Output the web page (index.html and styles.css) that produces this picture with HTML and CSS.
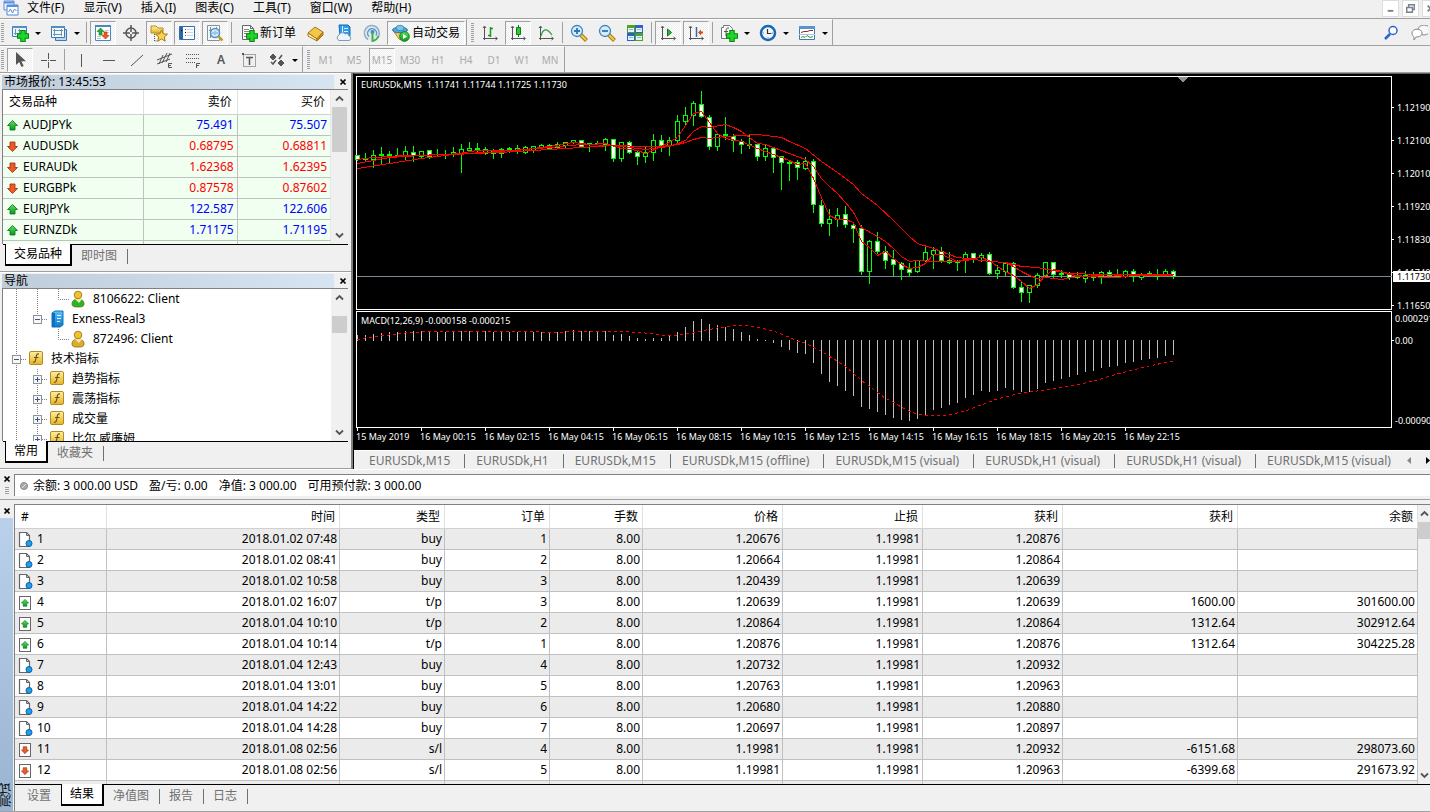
FILE: index.html
```html
<!DOCTYPE html>
<html lang="zh-CN">
<head>
<meta charset="utf-8">
<title>EURUSDk,M15</title>
<link rel="stylesheet" href="styles.css">
</head>
<body>
<svg class="defs" aria-hidden="true">
  <defs>
    <linearGradient id="gold" x1="0" y1="0" x2="0" y2="1"><stop offset="0" stop-color="#fff0a0"/><stop offset="1" stop-color="#e3b32a"/></linearGradient>
    <linearGradient id="green" x1="0" y1="0" x2="0" y2="1"><stop offset="0" stop-color="#5be05b"/><stop offset="1" stop-color="#0a9a1c"/></linearGradient>
    <linearGradient id="blue" x1="0" y1="0" x2="0" y2="1"><stop offset="0" stop-color="#55c4fb"/><stop offset="1" stop-color="#0b77c9"/></linearGradient>
  </defs>
  <symbol id="plus" viewBox="0 0 11 11"><path d="M3.500.5h4v3h3v4h-3v3h-4v-3h-3v-4h3z" fill="#1bd82a" stroke="#078a12"/></symbol>
  <symbol id="app" viewBox="0 0 16 16"><path d="M1 1h10v9H1z" fill="#eef5ff" stroke="#5b8fdc"/><path d="M1 2.500h10" stroke="#5b8fdc" stroke-width="2"/><path d="M4 5h11v10H4z" fill="#fff" stroke="#4f86d8"/><path d="M4 6h11" stroke="#5b8fdc" stroke-width="2"/><path d="M5.500 12l2-3 2 4 2-4 2 2" fill="none" stroke="#4f86d8"/></symbol>
  <symbol id="newchart" viewBox="0 0 18 18"><path d="M1.500 2.500h14v10h-14z" fill="#e9f4fb" stroke="#3f79b0"/><path d="M1 3h15" stroke="#4f8fc6" stroke-width="2"/><path d="M4.500 5v6M3 9.500h9M8.500 5v5M7 6.500h5" stroke="#6b93b5" fill="none"/><use href="#plus" x="6" y="6" width="12" height="12"/></symbol>
  <symbol id="profiles" viewBox="0 0 18 18"><path d="M5.500 5.500h11v11h-11z" fill="#bcd8ee" stroke="#3f79b0"/><path d="M1.500 2.500h13v11h-13z" fill="#f2f9fd" stroke="#3f79b0"/><path d="M1 3h14" stroke="#4f8fc6" stroke-width="2"/><path d="M4.500 5v7M3 10.500h9M11.500 5v7M3 6.500h10" stroke="#6b93b5" fill="none"/></symbol>
  <symbol id="market" viewBox="0 0 18 18"><path d="M1.500 1.500h15v15h-15z" fill="#fff" stroke="#4d86c0"/><path d="M1 2h16" stroke="#4d86c0" stroke-width="2"/><path d="M11 6.500h4M12 8.500h3M3 12.500h4M3 14.500h4" stroke="#b4c8dd"/><path d="M6.500 4l3.500 3.500H8V11H5V7.500H3z" fill="#2cad35" stroke="#087a13" stroke-width=".6"/><path d="M10 8h3v3.500h2L11.500 15 8 11.500h2z" fill="#ef5b25" stroke="#a92c07" stroke-width=".6"/></symbol>
  <symbol id="target" viewBox="0 0 18 18"><circle cx="9" cy="9" r="5" fill="none" stroke="#555" stroke-width="1.500"/><path d="M9 1v7M9 10v7M1 9h7M10 9h7" stroke="#555" stroke-width="1.500"/></symbol>
  <symbol id="favs" viewBox="0 0 18 18"><path d="M1 2h5l2 2h5v5H1z" fill="url(#gold)" stroke="#b88a1a"/><path d="M4.500 10v7H8" fill="none" stroke="#555" stroke-dasharray="1 1"/><path d="M11.500 6l1.700 3.800 4.300.4-3.200 2.800.9 4.200-3.700-2.200-3.700 2.200.9-4.200-3.200-2.800 4.300-.4z" fill="#fbd24c" stroke="#a57a12"/></symbol>
  <symbol id="terminal" viewBox="0 0 18 18"><path d="M1.500 2.500h15v13h-15z" fill="#fff" stroke="#2f6fb2"/><path d="M3.500 3v12" stroke="#2a66ab" stroke-width="3"/><path d="M7 5.500h1M7 11.500h1" stroke="#e22"/><path d="M7 8.500h1M3 6.500h1" stroke="#000"/><path d="M9 5.500h6M9 8.500h6M9 11.500h6" stroke="#c6d8ea"/></symbol>
  <symbol id="tester" viewBox="0 0 18 18"><path d="M1.500 1.500h12v15h-12z" fill="#f6f8fa" stroke="#8a9097"/><path d="M4.500 3v11M3 6.500h3M10.500 3v5" stroke="#7f878e"/><circle cx="9" cy="9" r="4.500" fill="#cfe9fa" fill-opacity=".9" stroke="#5793c4" stroke-width="1.500"/><path d="M12.500 12.500l4 4" stroke="#c99a2a" stroke-width="2.500"/><path d="M7 10V8M9 11V7M11 10V8" stroke="#6aa3cf"/></symbol>
  <symbol id="order" viewBox="0 0 18 18"><path d="M2.500 1.500h8l3 3v11h-11z" fill="#fafafa" stroke="#666"/><path d="M10.500 1.500v3h3" fill="none" stroke="#666"/><path d="M4 5.500h5M4 7.500h7M4 9.500h6M4 12.500h3" stroke="#888"/><use href="#plus" x="6" y="6" width="12" height="12"/></symbol>
  <symbol id="book" viewBox="0 0 18 18"><path d="M1 9l7-6 8 5-6 7z" fill="#f3c84a" stroke="#a8760d"/><path d="M1 9v3l9 5v-2z" fill="#fff3c4" stroke="#a8760d"/><path d="M10 15l6-7v3l-6 6z" fill="#c98d17" stroke="#a8760d"/></symbol>
  <symbol id="cloud" viewBox="0 0 18 18"><path d="M4 1h9l2 2v9H5z" fill="#2f9cec" stroke="#1769b0"/><path d="M7.500 2v9M9 4.500h4M9 7.500h4" stroke="#d7efff"/><path d="M4 16.500a3 3 0 0 1 0-5.500 3.500 3.500 0 0 1 6-1 3 3 0 0 1 4 2 2.300 2.300 0 0 1 0 4.500z" fill="#edf3fb" stroke="#7f9cbd"/></symbol>
  <symbol id="signal" viewBox="0 0 18 18"><circle cx="9" cy="9" r="8" fill="#e1e8ef"/><path d="M5 15.500a7.500 7.500 0 1 1 9-1" fill="none" stroke="#93abc0" stroke-width="1.500"/><path d="M6 12.500a4.500 4.500 0 1 1 7-1" fill="none" stroke="#5f9bbd" stroke-width="1.500"/><circle cx="9.500" cy="8" r="2" fill="#3a86c8"/><path d="M9.500 8v9a8 8 0 0 0 6-5" fill="none" stroke="#3fb14c" stroke-width="2"/></symbol>
  <symbol id="auto" viewBox="0 0 18 18"><path d="M2 8h12l-5 8-2-1z" fill="#f5cf55" stroke="#ba8d1c"/><ellipse cx="8" cy="6" rx="7.500" ry="2.800" fill="#4fa8d8" stroke="#2a78a8"/><ellipse cx="8" cy="4" rx="4" ry="2.800" fill="#76c6ea" stroke="#2a78a8" stroke-width=".7"/><circle cx="12.500" cy="12.500" r="4.800" fill="url(#green)" stroke="#0a7a17"/><path d="M11 10v5l4-2.500z" fill="#fff"/></symbol>
  <symbol id="axes" viewBox="0 0 18 18"><path d="M3.500 3v13M2 14.500h14M2 4l1.500-2L5 4M14.500 13l2 1.500-2 1.500" fill="none" stroke="#555"/></symbol>
  <symbol id="bars" viewBox="0 0 18 18"><use href="#axes"/><path d="M7 11.500h2M9.500 3v10M9 4.500h3" fill="none" stroke="#149a22" stroke-width="1.500"/></symbol>
  <symbol id="candles" viewBox="0 0 18 18"><use href="#axes"/><path d="M9.500 1v12" stroke="#0a7c18"/><path d="M7.500 3.500h4v7h-4z" fill="#27cc38" stroke="#0a7c18"/></symbol>
  <symbol id="line" viewBox="0 0 18 18"><use href="#axes"/><path d="M4 12c2-8 6-8 11-1" fill="none" stroke="#2b9a3a" stroke-width="1.200"/></symbol>
  <symbol id="zoomin" viewBox="0 0 18 18"><path d="M10.500 10.500l6 6" stroke="#a87c14" stroke-width="4"/><path d="M11 11l5 5" stroke="#f1cd4c" stroke-width="2"/><circle cx="7" cy="7" r="5.500" fill="#d3ecfa" stroke="#4286bd" stroke-width="1.300"/><path d="M4 7h6M7 4v6" stroke="#2c77b4" stroke-width="1.800"/></symbol>
  <symbol id="zoomout" viewBox="0 0 18 18"><path d="M10.500 10.500l6 6" stroke="#a87c14" stroke-width="4"/><path d="M11 11l5 5" stroke="#f1cd4c" stroke-width="2"/><circle cx="7" cy="7" r="5.500" fill="#d3ecfa" stroke="#4286bd" stroke-width="1.300"/><path d="M4 7h6" stroke="#2c77b4" stroke-width="1.800"/></symbol>
  <symbol id="tile" viewBox="0 0 18 18"><path d="M1 1h8v8H1zM9 9h8v8H9z" fill="#4aa51c"/><path d="M9 1h8v8H9zM1 9h8v8H1z" fill="#2c62cc"/><path d="M2 4h6v4H2zM10 4h6v4h-6zM2 12h6v4H2zM10 12h6v4h-6z" fill="#e9f2fb"/><path d="M3 5.500h4M11 5.500h4M3 13.500h4M11 13.500h4" stroke="#8fb9d9"/></symbol>
  <symbol id="scroll" viewBox="0 0 18 18"><use href="#axes"/><path d="M8.500 5v7l4-3.500z" fill="#25bb35" stroke="#0a7c18"/></symbol>
  <symbol id="shift" viewBox="0 0 18 18"><use href="#axes"/><path d="M9.500 3v10" stroke="#2c68ad" stroke-width="1.500"/><path d="M11 8.500l3-3v2h2v2h-2v2z" fill="#dd4511"/></symbol>
  <symbol id="indicators" viewBox="0 0 18 18"><path d="M1.500 3.500h2v-2h6l3 3v10h-11z" fill="#fafafa" stroke="#777"/><path d="M9 4c-3-.5-3 1-3 8M4 7.500h4" fill="none" stroke="#555"/><use href="#plus" x="6" y="6" width="12" height="12"/></symbol>
  <symbol id="clock" viewBox="0 0 18 18"><circle cx="9" cy="9" r="7" fill="#eef6fc" stroke="#1c66b8" stroke-width="2.500"/><path d="M8.500 5v4.500h4" fill="none" stroke="#333" stroke-width="1.200"/><path d="M4 9h1M13 9h1M9 13v1" stroke="#888"/></symbol>
  <symbol id="template" viewBox="0 0 18 18"><path d="M1.500 2.500h15v13h-15z" fill="#fff" stroke="#3f79b0"/><path d="M1 3.500h16" stroke="#5396d2" stroke-width="3"/><path d="M3 8.500l3-1h3l3-1h3" fill="none" stroke="#8b2a1b"/><path d="M3 13.500l2-1 2 1 2-2 3 2 3-1" fill="none" stroke="#2f9b3d"/><path d="M1 10.500h16" stroke="#a8c6e0"/></symbol>
  <symbol id="cursor" viewBox="0 0 18 18"><path d="M5 1v13l3.200-3 2.300 5 2.200-1-2.300-4.800H15z" fill="#555"/></symbol>
  <symbol id="cross" viewBox="0 0 18 18"><path d="M9.500 2v6M9.500 11v6M2 9.500h6M11 9.500h6" stroke="#555"/><path d="M9 9h1v1H9z" fill="#555"/></symbol>
  <symbol id="vline" viewBox="0 0 18 18"><path d="M9.500 3v13" stroke="#555"/></symbol>
  <symbol id="hline" viewBox="0 0 18 18"><path d="M3 9.500h12" stroke="#555"/></symbol>
  <symbol id="trend" viewBox="0 0 18 18"><path d="M3 15L15 4" stroke="#555"/></symbol>
  <symbol id="channel" viewBox="0 0 18 18"><path d="M1 9l15-6M1 13l13-5M3 13L7 4M6 12l5-10M10 11l4-9" stroke="#555" fill="none"/><path d="M16 12.500h-3.500v4H16M12 14.500h3" fill="none" stroke="#555"/></symbol>
  <symbol id="fibo" viewBox="0 0 18 18"><path d="M2 3.500h14M2 7.500h14M2 11.500h9" stroke="#555" stroke-dasharray="1 1"/><path d="M12.500 17v-4.500H16M12 14.500h3" fill="none" stroke="#555"/></symbol>
  <symbol id="labelbox" viewBox="0 0 18 18"><path d="M3.500 3.500h12v12h-12z" fill="none" stroke="#555" stroke-dasharray="1 1"/><path d="M2 2h2v2H2z" fill="#555"/><path d="M6 6.500h7M9.500 6v8" stroke="#555" stroke-width="1.500"/></symbol>
  <symbol id="arrows" viewBox="0 0 18 18"><path d="M5 3l3 3-3 3-3-3zM13 9l3 3-3 3-3-3z" fill="#555" stroke="#555"/><path d="M3 11l2 2 3-4M11 8l3-4" fill="none" stroke="#555" stroke-width="1.500"/></symbol>
  <symbol id="up" viewBox="0 0 11 11"><path d="M5.500.5l5 5H8v4.500H3V5.500H.5z" fill="url(#green)" stroke="#08701a" stroke-width=".8"/></symbol>
  <symbol id="down" viewBox="0 0 11 11"><path d="M5.500 10.500l5-5H8V1H3v4.500H.5z" fill="#ee5a26" stroke="#9c2a08" stroke-width=".8"/></symbol>
  <symbol id="person" viewBox="0 0 18 18"><path d="M3 14c0-3 2-5 6-5s6 2 6 5-3 3-6 3-6 0-6-3z" fill="currentColor" stroke="#7d6a18" stroke-width=".8"/><path d="M6 9l4 4 3-4" fill="#ffe9a5"/><circle cx="9" cy="5" r="3.800" fill="#f2c230" stroke="#946c10" stroke-width=".8"/></symbol>
  <symbol id="server" viewBox="0 0 18 18"><path d="M4 3l3-2h8v14l-3 2H4z" fill="url(#blue)" stroke="#1170b8"/><path d="M4 3v13l3 1V3z" fill="#0f71bd"/><path d="M9 5.500h4M9 8.500h4M9 11.500h3" stroke="#e3f5ff"/></symbol>
  <symbol id="func" viewBox="0 0 18 18"><rect x="2.500" y="1.500" width="13" height="13" rx="1.500" fill="url(#gold)" stroke="#b78b1b"/><path d="M12 4c-2.500-.5-2.500 1-3 4s-1 5-3 4M7 7.500h4.500" fill="none" stroke="#6e5310" stroke-width="1.200"/></symbol>
  <symbol id="doc" viewBox="0 0 16 17"><path d="M2.500 1.500h7l3 3v11h-10z" fill="#fff" stroke="#666" stroke-width="1.200"/><path d="M9.500 1v3.500H13" fill="none" stroke="#666"/><circle cx="12" cy="12.500" r="3" fill="#1ea0ee" stroke="#0c5f9f"/></symbol>
  <symbol id="tp" viewBox="0 0 16 17"><rect x="2.500" y="2.500" width="11" height="13" fill="#fff" stroke="#666"/><use href="#up" x="4" y="5" width="8" height="8"/></symbol>
  <symbol id="sl" viewBox="0 0 16 17"><rect x="2.500" y="2.500" width="11" height="13" fill="#fff" stroke="#666"/><use href="#down" x="4" y="5" width="8" height="8"/></symbol>
  <symbol id="g-v" viewBox="0 0 21 20"><path d="M10.500 0v20" stroke="#808080" stroke-dasharray="1 1"/></symbol>
  <symbol id="g-l" viewBox="0 0 21 20"><path d="M10.500 0v10.500H21" fill="none" stroke="#808080" stroke-dasharray="1 1"/></symbol>
  <symbol id="g-box" viewBox="0 0 21 20"><path d="M15 10.500h6" stroke="#808080" stroke-dasharray="1 1"/><rect x="6.500" y="6.500" width="8" height="8" fill="#f7f7f7" stroke="#919191"/><path d="M8 10.500h5" stroke="#3657a0"/></symbol>
  <symbol id="g-minus" viewBox="0 0 21 20"><path d="M10.500 0v20" stroke="#808080" stroke-dasharray="1 1"/><use href="#g-box"/></symbol>
  <symbol id="g-last" viewBox="0 0 21 20"><path d="M10.500 0v6" stroke="#808080" stroke-dasharray="1 1"/><use href="#g-box"/></symbol>
  <symbol id="g-plus" viewBox="0 0 21 20"><use href="#g-minus"/><path d="M10.500 8v5" stroke="#3657a0"/></symbol>
  <symbol id="x" viewBox="0 0 9 9"><path d="M1.500 1.500l5 5M6.500 1.500l-5 5" stroke="#000" stroke-width="1.700"/></symbol>
  <symbol id="chev-up" viewBox="0 0 9 9"><path d="M1 6.500L4.500 3 8 6.500" fill="none" stroke="#555" stroke-width="1.800"/></symbol>
  <symbol id="chev-down" viewBox="0 0 9 9"><path d="M1 2.500L4.500 6 8 2.500" fill="none" stroke="#555" stroke-width="1.800"/></symbol>
</svg>

<header class="menubar">
  <svg class="app-icon"><use href="#app"/></svg>
  <nav class="menus">
    <button>文件(F)</button><button>显示(V)</button><button>插入(I)</button><button>图表(C)</button><button>工具(T)</button><button>窗口(W)</button><button>帮助(H)</button>
  </nav>
  <div class="mdi">
    <button aria-label="最小化"><svg viewBox="0 0 16 16"><path d="M5 10.500h6" stroke="#76808e" stroke-width="2"/></svg></button>
    <button aria-label="还原"><svg viewBox="0 0 16 16"><path d="M4 7h6v5H4zM6 6V4h6v5h-2" fill="none" stroke="#76808e" stroke-width="1.500"/></svg></button>
    <button aria-label="关闭"><svg viewBox="0 0 16 16"><path d="M5 5l6 6M11 5l-6 6" stroke="#76808e" stroke-width="2"/></svg></button>
  </div>
</header>

<div class="toolbar">
  <div class="band">
    <i class="grip"></i>
    <button class="tool drop" aria-label="新图表"><svg><use href="#newchart"/></svg></button>
    <button class="tool drop" aria-label="图表组合"><svg><use href="#profiles"/></svg></button>
    <i class="sep"></i>
    <button class="tool on" aria-label="市场报价"><svg><use href="#market"/></svg></button>
    <button class="tool" aria-label="数据窗口"><svg><use href="#target"/></svg></button>
    <button class="tool on" aria-label="导航"><svg><use href="#favs"/></svg></button>
    <button class="tool on" aria-label="终端"><svg><use href="#terminal"/></svg></button>
    <button class="tool on" aria-label="策略测试"><svg><use href="#tester"/></svg></button>
    <i class="sep"></i>
    <button class="tool text"><svg><use href="#order"/></svg><span>新订单</span></button>
    <button class="tool" aria-label="编辑器"><svg><use href="#book"/></svg></button>
    <button class="tool" aria-label="云"><svg><use href="#cloud"/></svg></button>
    <button class="tool" aria-label="信号"><svg><use href="#signal"/></svg></button>
    <button class="tool text on"><svg><use href="#auto"/></svg><span>自动交易</span></button>
  </div>
  <div class="band">
    <i class="grip"></i>
    <button class="tool" aria-label="柱状图"><svg><use href="#bars"/></svg></button>
    <button class="tool on" aria-label="阴阳烛"><svg><use href="#candles"/></svg></button>
    <button class="tool" aria-label="折线图"><svg><use href="#line"/></svg></button>
    <i class="sep"></i>
    <button class="tool" aria-label="放大"><svg><use href="#zoomin"/></svg></button>
    <button class="tool" aria-label="缩小"><svg><use href="#zoomout"/></svg></button>
    <button class="tool" aria-label="平铺"><svg><use href="#tile"/></svg></button>
    <i class="sep"></i>
    <button class="tool on" aria-label="自动滚动"><svg><use href="#scroll"/></svg></button>
    <button class="tool on" aria-label="图表平移"><svg><use href="#shift"/></svg></button>
    <i class="sep"></i>
    <button class="tool drop" aria-label="指标"><svg><use href="#indicators"/></svg></button>
    <button class="tool drop" aria-label="周期"><svg><use href="#clock"/></svg></button>
    <button class="tool drop" aria-label="模板"><svg><use href="#template"/></svg></button>
  </div>
  <div class="corner">
    <button aria-label="搜索"><svg viewBox="0 0 18 18"><path d="M8 9l-5 5" stroke="#2a63cc" stroke-width="2.500"/><circle cx="11" cy="5.500" r="4" fill="#fff" stroke="#2a63cc" stroke-width="1.500"/></svg></button>
    <button aria-label="聊天"><svg viewBox="0 0 18 18"><ellipse cx="14" cy="5" rx="6" ry="5" fill="#f8f8f8" stroke="#888"/><path d="M2 8c0-5 10-5 10 0 0 3-3 4-6 4l-2 3v-3c-1-1-2-2-2-4z" fill="#fff" stroke="#888"/></svg></button>
  </div>
</div>

<div class="toolbar">
  <div class="band">
    <i class="grip"></i>
    <button class="tool on" aria-label="光标"><svg><use href="#cursor"/></svg></button>
    <button class="tool" aria-label="十字线"><svg><use href="#cross"/></svg></button>
    <i class="sep"></i>
    <button class="tool" aria-label="垂直线"><svg><use href="#vline"/></svg></button>
    <button class="tool" aria-label="水平线"><svg><use href="#hline"/></svg></button>
    <button class="tool" aria-label="趋势线"><svg><use href="#trend"/></svg></button>
    <button class="tool" aria-label="等距通道"><svg><use href="#channel"/></svg></button>
    <button class="tool" aria-label="斐波纳契"><svg><use href="#fibo"/></svg></button>
    <button class="tool letter">A</button>
    <button class="tool" aria-label="文字标签"><svg><use href="#labelbox"/></svg></button>
    <button class="tool drop" aria-label="箭头"><svg><use href="#arrows"/></svg></button>
  </div>
  <div class="band">
    <i class="grip"></i>
    <button class="tool tf">M1</button><button class="tool tf">M5</button><button class="tool tf on">M15</button><button class="tool tf">M30</button><button class="tool tf">H1</button><button class="tool tf">H4</button><button class="tool tf">D1</button><button class="tool tf">W1</button><button class="tool tf">MN</button>
  </div>
</div>

<main class="workspace">
  <aside class="side">
    <section class="panel">
      <div class="caption"><h2>市场报价: 13:45:53</h2><button aria-label="关闭"><svg><use href="#x"/></svg></button></div>
      <div class="pane quotes-pane">
        <table class="quotes">
          <colgroup><col class="q-name"><col class="q-price"><col class="q-price"></colgroup>
          <thead><tr><th>交易品种</th><th>卖价</th><th>买价</th></tr></thead>
          <tbody>
            <tr class="rise"><td><svg><use href="#up"/></svg>AUDJPYk</td><td>75.491</td><td>75.507</td></tr>
            <tr class="fall"><td><svg><use href="#down"/></svg>AUDUSDk</td><td>0.68795</td><td>0.68811</td></tr>
            <tr class="fall"><td><svg><use href="#down"/></svg>EURAUDk</td><td>1.62368</td><td>1.62395</td></tr>
            <tr class="fall"><td><svg><use href="#down"/></svg>EURGBPk</td><td>0.87578</td><td>0.87602</td></tr>
            <tr class="rise"><td><svg><use href="#up"/></svg>EURJPYk</td><td>122.587</td><td>122.606</td></tr>
            <tr class="rise"><td><svg><use href="#up"/></svg>EURNZDk</td><td>1.71175</td><td>1.71195</td></tr>
            <tr><td></td><td></td><td></td></tr>
          </tbody>
        </table>
        <div class="scrollbar quotes-bar"><svg><use href="#chev-up"/></svg><i></i><svg><use href="#chev-down"/></svg></div>
      </div>
      <div class="tabs"><button class="active">交易品种</button><button>即时图</button></div>
    </section>
    <section class="panel">
      <div class="caption"><h2>导航</h2><button aria-label="关闭"><svg><use href="#x"/></svg></button></div>
      <div class="pane tree-pane">
        <ul class="tree">
          <li><svg class="guide"><use href="#g-v"/></svg><svg class="guide"><use href="#g-v"/></svg><svg class="guide"><use href="#g-l"/></svg><svg class="node live"><use href="#person"/></svg>8106622: Client</li>
          <li><svg class="guide"><use href="#g-v"/></svg><svg class="guide"><use href="#g-last"/></svg><svg class="node"><use href="#server"/></svg>Exness-Real3</li>
          <li><svg class="guide"><use href="#g-v"/></svg><svg class="guide"></svg><svg class="guide"><use href="#g-l"/></svg><svg class="node idle"><use href="#person"/></svg>872496: Client</li>
          <li><svg class="guide"><use href="#g-minus"/></svg><svg class="node"><use href="#func"/></svg>技术指标</li>
          <li><svg class="guide"><use href="#g-v"/></svg><svg class="guide"><use href="#g-plus"/></svg><svg class="node"><use href="#func"/></svg>趋势指标</li>
          <li><svg class="guide"><use href="#g-v"/></svg><svg class="guide"><use href="#g-plus"/></svg><svg class="node"><use href="#func"/></svg>震荡指标</li>
          <li><svg class="guide"><use href="#g-v"/></svg><svg class="guide"><use href="#g-plus"/></svg><svg class="node"><use href="#func"/></svg>成交量</li>
          <li><svg class="guide"><use href="#g-v"/></svg><svg class="guide"><use href="#g-plus"/></svg><svg class="node"><use href="#func"/></svg>比尔 威廉姆</li>
        </ul>
        <div class="scrollbar tree-bar"><svg><use href="#chev-up"/></svg><i></i><svg><use href="#chev-down"/></svg></div>
      </div>
      <div class="tabs"><button class="active">常用</button><button>收藏夹</button></div>
    </section>
  </aside>

  <section class="charts">
    <svg class="chart" id="chart" viewBox="354 74 1076 375" preserveAspectRatio="xMinYMin meet" role="img" aria-label="EURUSDk,M15"></svg>
    <div class="chart-tabs">
      <button>EURUSDk,M15</button><button>EURUSDk,H1</button><button>EURUSDk,M15</button><button>EURUSDk,M15 (offline)</button><button>EURUSDk,M15 (visual)</button><button>EURUSDk,H1 (visual)</button><button>EURUSDk,H1 (visual)</button><button>EURUSDk,M15 (visual)</button>
      <svg class="tab-arrows" viewBox="0 0 24 10"><path d="M5 1v7L1 4.500z" fill="#888"/><path d="M20 1v7l4-3.500z" fill="#000"/></svg>
    </div>
  </section>
</main>

<section class="account">
  <div class="handle"><button aria-label="关闭"><svg><use href="#x"/></svg></button><i></i></div>
  <p><svg viewBox="0 0 8 8"><circle cx="4" cy="4" r="3.500" fill="#aaa" stroke="#888"/><path d="M2 6l4-4" stroke="#ddd"/></svg><span>余额: 3 000.00 USD</span><span>盈/亏: 0.00</span><span>净值: 3 000.00</span><span>可用预付款: 3 000.00</span></p>
</section>

<section class="results">
  <div class="strip"><button aria-label="关闭"><svg><use href="#x"/></svg></button><h2>测试</h2></div>
  <div class="results-body">
    <div class="grid">
      <table class="trades">
        <colgroup><col class="c-id"><col class="c-time"><col class="c-mid"><col class="c-mid"><col class="c-lot"><col class="c-price"><col class="c-price"><col class="c-price"><col class="c-profit"><col></colgroup>
        <thead><tr><th>#</th><th>时间</th><th>类型</th><th>订单</th><th>手数</th><th>价格</th><th>止损</th><th>获利</th><th>获利</th><th>余额</th></tr></thead>
        <tbody>
          <tr><td><svg><use href="#doc"/></svg>1</td><td>2018.01.02 07:48</td><td>buy</td><td>1</td><td>8.00</td><td>1.20676</td><td>1.19981</td><td>1.20876</td><td></td><td></td></tr>
          <tr><td><svg><use href="#doc"/></svg>2</td><td>2018.01.02 08:41</td><td>buy</td><td>2</td><td>8.00</td><td>1.20664</td><td>1.19981</td><td>1.20864</td><td></td><td></td></tr>
          <tr><td><svg><use href="#doc"/></svg>3</td><td>2018.01.02 10:58</td><td>buy</td><td>3</td><td>8.00</td><td>1.20439</td><td>1.19981</td><td>1.20639</td><td></td><td></td></tr>
          <tr><td><svg><use href="#tp"/></svg>4</td><td>2018.01.02 16:07</td><td>t/p</td><td>3</td><td>8.00</td><td>1.20639</td><td>1.19981</td><td>1.20639</td><td>1600.00</td><td>301600.00</td></tr>
          <tr><td><svg><use href="#tp"/></svg>5</td><td>2018.01.04 10:10</td><td>t/p</td><td>2</td><td>8.00</td><td>1.20864</td><td>1.19981</td><td>1.20864</td><td>1312.64</td><td>302912.64</td></tr>
          <tr><td><svg><use href="#tp"/></svg>6</td><td>2018.01.04 10:14</td><td>t/p</td><td>1</td><td>8.00</td><td>1.20876</td><td>1.19981</td><td>1.20876</td><td>1312.64</td><td>304225.28</td></tr>
          <tr><td><svg><use href="#doc"/></svg>7</td><td>2018.01.04 12:43</td><td>buy</td><td>4</td><td>8.00</td><td>1.20732</td><td>1.19981</td><td>1.20932</td><td></td><td></td></tr>
          <tr><td><svg><use href="#doc"/></svg>8</td><td>2018.01.04 13:01</td><td>buy</td><td>5</td><td>8.00</td><td>1.20763</td><td>1.19981</td><td>1.20963</td><td></td><td></td></tr>
          <tr><td><svg><use href="#doc"/></svg>9</td><td>2018.01.04 14:22</td><td>buy</td><td>6</td><td>8.00</td><td>1.20680</td><td>1.19981</td><td>1.20880</td><td></td><td></td></tr>
          <tr><td><svg><use href="#doc"/></svg>10</td><td>2018.01.04 14:28</td><td>buy</td><td>7</td><td>8.00</td><td>1.20697</td><td>1.19981</td><td>1.20897</td><td></td><td></td></tr>
          <tr><td><svg><use href="#sl"/></svg>11</td><td>2018.01.08 02:56</td><td>s/l</td><td>4</td><td>8.00</td><td>1.19981</td><td>1.19981</td><td>1.20932</td><td>-6151.68</td><td>298073.60</td></tr>
          <tr><td><svg><use href="#sl"/></svg>12</td><td>2018.01.08 02:56</td><td>s/l</td><td>5</td><td>8.00</td><td>1.19981</td><td>1.19981</td><td>1.20963</td><td>-6399.68</td><td>291673.92</td></tr>
          <tr><td></td><td></td><td></td><td></td><td></td><td></td><td></td><td></td><td></td><td></td></tr>
        </tbody>
      </table>
      <div class="scrollbar trades-bar"><svg><use href="#chev-up"/></svg><i></i><svg><use href="#chev-down"/></svg></div>
    </div>
    <div class="tabs"><button class="before">设置</button><button class="active">结果</button><button>净值图</button><button>报告</button><button>日志</button></div>
  </div>
</section>
<script src="chart.js"></script>
</body>
</html>
```

FILE: styles.css
```css
* { box-sizing: border-box; }

body {
  margin: 0;
  height: 100vh;
  display: flex;
  flex-direction: column;
  overflow: hidden;
  background: #f0f0f0;
  color: #000;
  font: 12px/16px "Noto Sans", "Noto Sans CJK SC", sans-serif;
}

h2, p, ul { margin: 0; padding: 0; font-size: 12px; font-weight: 400; }
button { margin: 0; padding: 0; border: 0; background: none; color: inherit; font: inherit; white-space: nowrap; }
svg { display: block; flex: none; }
i { display: block; flex: none; }
.defs { position: absolute; width: 0; height: 0; }

/* menu */
.menubar { display: flex; height: 18px; align-items: flex-start; padding-left: 3px; flex: none; }
.app-icon { width: 16px; height: 16px; margin-right: 8px; }
.menus { display: flex; gap: 19px; flex: 1; }
.mdi { display: flex; gap: 3px; overflow: hidden; width: 48px; }
.mdi button { width: 17px; height: 17px; background: #fff; border: 1px solid #ddd; flex: none; }

/* toolbars */
.toolbar { display: flex; height: 27px; flex: none; border-top: 1px solid #a0a0a0; }
.band { display: flex; align-items: stretch; padding: 1px 0 0 1px; border-top: 1px solid #fff; border-right: 1px solid #a0a0a0; margin-right: 3px; }
.grip { width: 3px; margin: 2px 2px 2px 0; background: repeating-linear-gradient(#a0a0a0 0 1px, #f0f0f0 1px 2px); }
.sep { width: 1px; margin: 1px 2px 2px 2px; background: #a0a0a0; }
.tool { width: 26px; margin: 0 1px; display: flex; align-items: center; justify-content: center; border: 1px solid transparent; }
.tool svg { width: 18px; height: 18px; }
.tool.on {
  border-color: #a0a0a0 #fff #fff #a0a0a0;
  background: repeating-conic-gradient(#fff 0 25%, #ececec 0 50%) 0 0 / 2px 2px;
}
.tool.drop { width: 37px; justify-content: flex-start; padding-left: 3px; gap: 6px; }
.tool.drop::after { content: ""; border: 3px solid transparent; border-top-color: #000; border-bottom: 0; }
.tool.text { width: auto; padding: 0 4px; gap: 2px; }
.letter { color: #555; font-weight: 600; }
.tf { color: #aaa; font-size: 10px; }
.corner { margin-left: auto; display: flex; gap: 10px; width: 48px; padding-top: 4px; overflow: hidden; }
.corner svg { width: 18px; height: 18px; }

/* workspace */
.workspace { display: flex; flex: none; border-top: 1px solid #a0a0a0; }
.side { width: 353px; flex: none; display: flex; flex-direction: column; border-right: 2px solid #808080; }
.panel { display: flex; flex-direction: column; border-bottom: 1px solid #a0a0a0; border-top: 1px solid #fff; }
.caption { display: flex; padding: 1px 3px 0 2px; }
.caption h2 { flex: 1; height: 14px; padding-left: 2px; line-height: 14px; background: linear-gradient(90deg, #bfcddb, #d7e4f2); }
.caption button { width: 14px; display: flex; align-items: center; justify-content: flex-end; }
.caption svg { width: 9px; height: 9px; }
.pane { display: flex; margin: 0 3px 0 2px; overflow: hidden; background: #fff; border-top: 1px solid #808080; border-left: 1px solid #808080; }
.quotes-pane { height: 155px; }
.tree-pane { height: 153px; }

table { border-collapse: separate; border-spacing: 0; table-layout: fixed; flex: 1; width: 100%; }
th { font-weight: 400; text-align: right; background: #fff; border-right: 1px solid #e0e0e0; border-bottom: 1px solid #d0d0d0; }
td { text-align: right; height: 21px; border-right: 1px solid #c0c0c0; border-bottom: 1px solid #c0c0c0; white-space: nowrap; }
th:first-child, td:first-child { text-align: left; }
td svg { display: inline-block; vertical-align: middle; margin: -3px 0; }

.quotes { align-self: flex-start; background: #f0fff0; }
.quotes th { height: 25px; padding: 0 5px 0 6px; }
.quotes td { padding: 0 3px; }
.quotes td:first-child { padding-left: 4px; }
.quotes td:last-child, .quotes th:last-child { border-right-color: #e8e8e8; }
.quotes svg { width: 11px; height: 11px; margin-right: 5px; }
.q-name { width: 141px; }
.q-price { width: 93px; }
.rise td + td { color: #0000ff; }
.fall td + td { color: #ff0000; }

.scrollbar { width: 17px; flex: none; display: flex; flex-direction: column; align-items: center; background: #f0f0f0; }
.scrollbar svg { width: 9px; height: 17px; }
.scrollbar i { width: 15px; background: #cdcdcd; }
.scrollbar svg:last-child { margin-top: auto; }
.quotes-bar i { height: 45px; }
.tree-bar i { height: 17px; margin-top: 10px; }

.tree { flex: 1; list-style: none; padding-left: 3px; }
.tree li { display: flex; height: 20px; align-items: center; white-space: nowrap; }
.guide { width: 21px; height: 20px; }
.node { width: 18px; height: 18px; margin-right: 6px; }
.live { color: #22b82c; }
.idle { color: #dcae2c; }

.tabs { display: flex; height: 27px; margin: 0 3px; border-top: 1px solid #000; color: #707070; }
.tabs button { position: relative; height: 21px; padding: 0 11px 0 9px; }
.tabs button::after { content: ""; position: absolute; right: 0; top: 4px; height: 15px; border-right: 1px solid #707070; }
.tabs .active { height: 22px; margin: -1px 0 0 2px; padding: 0 8px; background: #fff; color: #000; border: 1px solid #000; border-top: 0; border-right-width: 2px; border-bottom-width: 2px; }
.tabs .active::after, .tabs .before::after { display: none; }

/* chart window */
.charts { flex: 1; min-width: 0; display: flex; flex-direction: column; border-top: 1px solid #606060; border-left: 1px solid #000; }
.chart { width: 100%; height: auto; background: #000; }
.chart text { font: 9px "Noto Sans", sans-serif; fill: #fff; }
.chart .inverse { fill: #000; }
.chart-tabs { display: flex; flex: 1; align-items: center; overflow: hidden; padding: 2px 0 0 4px; border-top: 1px solid #000; box-shadow: inset 0 1px #fff; color: #707070; }
.chart-tabs button { padding: 0 14px 0 11px; line-height: 14px; border-right: 1px solid #707070; }
.chart-tabs button:nth-last-of-type(1) { border-right: 0; padding-right: 0; }
.tab-arrows { width: 24px; height: 10px; margin-left: auto; }

/* account bar */
.account { display: flex; flex: none; height: 31px; border-top: 1px solid #fff; border-bottom: 1px solid #a0a0a0; padding: 4px 0 3px; }
.handle { width: 14px; display: flex; flex-direction: column; align-items: center; gap: 3px; padding-top: 1px; }
.handle svg { width: 9px; height: 9px; }
.handle i { width: 4px; height: 8px; background: repeating-linear-gradient(#a0a0a0 0 1px, #f0f0f0 1px 2px); }
.account p { flex: 1; display: flex; align-items: center; gap: 11px; background: #fff; border: 1px solid #808080; border-width: 1px 0 0 1px; padding-left: 5px; }
.account p svg { width: 8px; height: 8px; margin-right: -6px; }

/* results */
.results { flex: 1; min-height: 0; display: flex; padding-top: 4px; border-bottom: 1px solid #a0a0a0; }
.strip { width: 14px; flex: none; display: flex; flex-direction: column; }
.strip button { height: 14px; display: flex; align-items: center; justify-content: center; }
.strip svg { width: 9px; height: 9px; }
.strip h2 { flex: 1; width: 13px; padding-top: 4px; line-height: 13px; writing-mode: vertical-rl; transform: rotate(180deg); background: linear-gradient(0deg, #b9d1ea, #99b4d1); align-self: flex-start; }
.results-body { flex: 1; min-width: 0; display: flex; flex-direction: column; border-top: 1px solid #808080; border-left: 1px solid #808080; }
.grid { flex: 1; min-height: 0; display: flex; overflow: hidden; background: #fff; }
.trades { align-self: flex-start; }
.trades th { height: 24px; padding: 0 4px 0 6px; }
.trades td { padding: 0 2px; }
.trades tbody tr:nth-child(odd) { background: #ebebeb; }
.trades svg { width: 16px; height: 17px; margin-right: 4px; }
.c-id { width: 92px; }
.c-time { width: 233px; }
.c-mid { width: 105px; }
.c-lot { width: 93px; }
.c-price { width: 140px; }
.c-profit { width: 175px; }
.trades-bar { width: 12px; overflow: hidden; }
.trades-bar i { width: 12px; height: 17px; }
.results .tabs { margin: 0; padding-left: 3px; flex: none; }
.results .tabs .active { margin-left: 0; }
.tabs .before { padding-right: 10px; }
```

FILE: chart.js
```js
const svg = document.getElementById("chart");
const out = [];
const FIRST = 357, STEP = 8, ZERO = 340;
const barX = k => FIRST + k * STEP;

// [high, body top, body bottom, low, filled]
const candles = [
  [155,155,159,160,1],[153,158,159,160,0],[150,155,159,167,0],[147,154,155,164,0],[151,154,155,162,0],[148,155,155,155,0],
  [146,151,155,160,0],[146,152,155,161,1],[151,151,156,157,0],[150,150,156,158,1],[149,154,154,156,0],[150,154,155,158,0],
  [147,152,154,156,0],[144,149,154,172,0],[142,148,150,151,0],[143,148,149,151,0],[147,149,153,154,0],[149,150,153,158,0],
  [148,149,153,157,0],[147,148,149,152,0],[145,148,150,153,0],[146,147,152,153,0],[146,146,150,152,0],[144,145,147,148,0],
  [144,145,148,149,0],[142,144,147,148,0],[142,142,145,148,0],[140,140,142,143,0],[140,140,146,147,1],[143,143,144,151,0],
  [141,143,143,144,0],[138,139,144,150,0],[139,139,158,161,1],[142,142,158,161,0],[141,142,152,153,1],[150,152,156,164,1],
  [147,152,156,162,0],[134,140,152,160,0],[135,140,145,151,1],[137,140,145,155,0],[115,121,140,142,0],[107,115,121,125,0],
  [101,103,115,125,0],[91,104,116,117,1],[115,117,146,149,1],[134,134,146,150,0],[117,134,135,139,0],[134,136,140,151,1],
  [139,141,144,153,1],[135,144,145,148,0],[144,144,156,160,1],[144,148,156,160,0],[148,148,157,172,1],[156,156,162,189,1],
  [160,162,163,180,0],[160,162,167,179,1],[157,161,168,169,0],[159,161,204,212,1],[200,205,223,226,1],[209,219,223,235,0],
  [208,215,219,226,0],[206,214,224,227,1],[222,225,228,242,1],[225,228,271,274,1],[240,241,271,283,0],[232,241,251,253,1],
  [246,251,260,268,1],[250,259,264,275,1],[262,263,269,279,1],[263,269,272,275,1],[260,260,271,272,0],[247,252,260,261,0],
  [247,250,254,268,0],[247,251,260,262,1],[252,260,262,263,0],[260,261,262,270,0],[252,254,260,272,0],[253,253,259,262,1],
  [253,255,257,261,0],[252,254,273,274,1],[265,270,273,278,0],[262,263,271,275,0],[262,263,287,288,1],[282,287,292,301,1],
  [285,285,292,302,0],[273,275,285,287,0],[262,262,275,276,0],[262,262,274,278,1],[270,273,274,277,0],[272,274,277,279,1],
  [272,276,277,278,0],[271,275,278,282,0],[272,274,277,280,1],[271,272,276,283,0],[270,272,275,276,1],[269,275,276,277,0],
  [270,271,276,277,0],[269,271,276,281,1],[273,275,277,279,0],[271,273,275,276,0],[269,275,276,279,0],[269,271,275,276,0],
  [270,271,276,278,1]
];

// moving averages: bar index, y
const averages = [
  [0,159,2,157,6,155,12,154,15,150,20,150,24,146,27,142,29,144,31,143,33,148,35,150,36,153,38,146,40,137,41,125,42,113,43,111,44,122,45,133,46,138,48,141,50,148,52,154,54,160,55,164,56,163,57,178,58,197,59,215,60,219,61,219,62,222,63,241,64,247,65,255,66,251,67,258,68,264,69,268,70,267,71,263,72,254,73,254,75,261,76,259,78,257,79,260,80,266,81,271,82,275,83,281,84,288,85,284,86,275,87,269,88,271,89,274,91,276,94,274,96,276,98,274,102,274],
  [0,163,4,157,8,155,16,152,24,147,28,144,32,145,36,149,39,146,41,140,42,131,43,126,44,127,46,124,47,127,48,131,49,137,50,143,51,144,52,147,54,153,56,159,57,166,58,178,59,186,60,193,61,202,62,212,63,227,65,236,66,241,67,248,68,256,69,261,70,260,72,261,75,261,77,259,79,261,81,262,82,266,83,271,84,275,85,278,86,277,88,279,90,276,95,277,97,275,102,274],
  [0,168,4,163,8,158,12,154,20,151,26,148,32,145,36,146,38,146,40,144,41,142,42,139,43,137,44,138,46,136,50,134,51,135,53,137,54,141,56,148,58,161,60,172,62,184,63,193,65,205,67,220,69,236,70,243,72,248,73,251,75,257,79,261,81,262,83,266,85,267,87,270,89,273,93,274,102,275]
];

// end of each MACD bar
const macd = [335,335,334,333,332,332,331,331,331,332,332,332,332,331,331,331,331,332,332,332,332,331,332,332,332,332,331,330,331,331,331,331,335,334,336,338,339,338,338,336,332,327,321,319,324,325,327,329,332,335,339,341,343,347,350,353,354,363,374,382,386,391,396,407,409,412,415,418,420,421,419,415,410,408,405,403,398,395,391,392,391,388,390,392,392,389,383,381,379,377,375,372,371,368,367,366,363,362,360,359,358,356,355];

const signal = "357,340 365,338 373,337 389,335 405,333 421,332 440,331 525,331 540,332 565,332 581,331 605,331 630,332 645,333 661,335 677,335 693,333 701,331 717,328 733,326 745,325 757,327 773,331 789,337 797,341 805,343 813,347 821,351 829,356 837,361 845,366 853,373 861,380 869,386 877,392 885,398 893,402 901,407 909,411 917,414 925,415 949,415 957,413 965,411 973,408 989,402 997,399 1013,395 1029,392 1053,389 1077,385 1101,379 1117,374 1133,370 1149,366 1173,361";

const rect = (x, y, w, h, fill) => out.push(`<rect x="${x}" y="${y}" width="${w}" height="${h}" fill="${fill}"/>`);
const text = (x, y, s, cls = "") => out.push(`<text x="${x}" y="${y}" class="${cls}">${s}</text>`);

out.push('<g shape-rendering="crispEdges">');
out.push('<path d="M356.5 76.500h1035v233h-1035zM356.500 311.500h1035v116h-1035z" fill="none" stroke="#fff"/>');
rect(357, 276, 1035, 1, "#778899");

candles.forEach(([hi, top, bottom, lo, filled], k) => {
  const x = barX(k);
  rect(x, hi, 1, lo - hi + 1, "#00ff00");
  rect(x - 2, top, 5, bottom - top + 1, "#00ff00");
  if (bottom - top > 1) rect(x - 1, top + 1, 3, bottom - top - 1, filled ? "#fff" : "#000");
});

averages.forEach(a => {
  const pts = [];
  for (let i = 0; i < a.length; i += 2) pts.push(`${barX(a[i]) + .5},${a[i + 1] + .5}`);
  out.push(`<polyline points="${pts.join(" ")}" fill="none" stroke="#f00"/>`);
});

macd.forEach((y, k) => rect(barX(k), Math.min(y, ZERO), 1, Math.abs(y - ZERO) + (y < ZERO ? 1 : 0), "#c0c0c0"));
out.push(`<polyline points="${signal}" fill="none" stroke="#f00" stroke-dasharray="3 3"/>`);
out.push('<path d="M1177 77h11l-5.500 5.500z" fill="#909090"/>');

const prices = ["1.12190", "1.12100", "1.12010", "1.11920", "1.11830", "1.11740", "1.11650"];
prices.forEach((p, i) => rect(1392, 107 + 33 * i, 2, 1, "#fff"));
rect(1392, 340, 2, 1, "#fff");
for (let i = 0; i < 13; i++) rect(FIRST + 64 * i, 428, 1, 3, "#fff");
out.push("</g>");

prices.forEach((p, i) => text(1397, 111 + 33 * i, p));
rect(1393, 271, 37, 11, "#fff");
text(1397, 280, "1.11730", "inverse");
text(1395, 322, "0.000291");
text(1395, 344, "0.00");
text(1395, 424, "-0.000907");
text(361, 88, "EURUSDk,M15&#160; 1.11741 1.11744 1.11725 1.11730");
text(361, 324, "MACD(12,26,9) -0.000158 -0.000215");
["15 May 2019", "16 May 00:15", "16 May 02:15", "16 May 04:15", "16 May 06:15", "16 May 08:15", "16 May 10:15", "16 May 12:15", "16 May 14:15", "16 May 16:15", "16 May 18:15", "16 May 20:15", "16 May 22:15"]
  .forEach((t, i) => text(356 + 64 * i, 440, t));

svg.innerHTML = out.join("");
```
